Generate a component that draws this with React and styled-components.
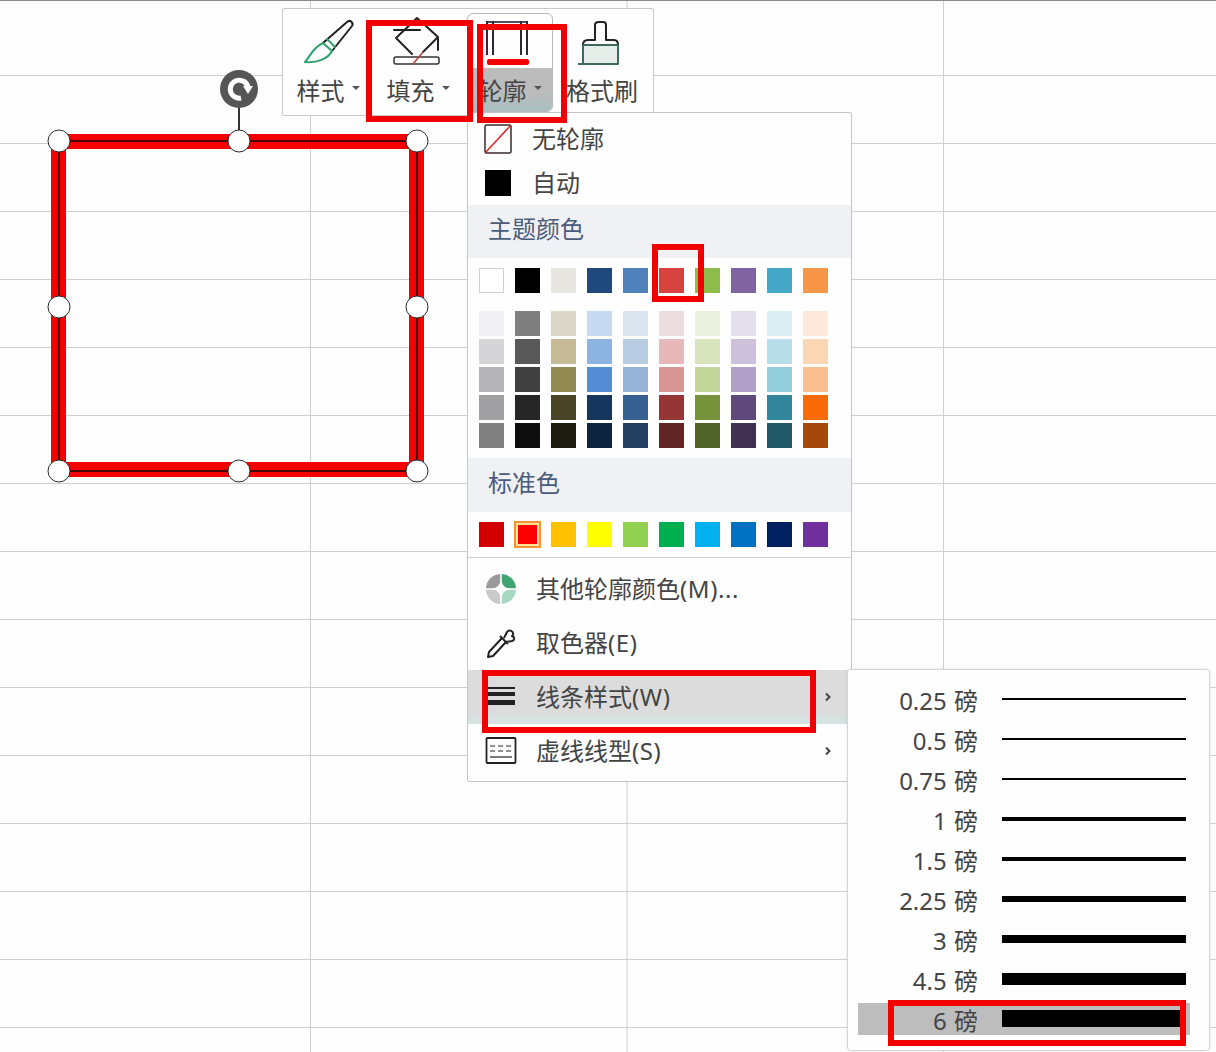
import React from "react";
import styled, { createGlobalStyle } from "styled-components";

const GlobalStyle = createGlobalStyle`
  html, body {
    margin: 0;
    padding: 0;
    background: #fdfdfd;
  }
  * {
    box-sizing: border-box;
  }
`;

const Page = styled.div`
  position: relative;
  width: 1216px;
  height: 1052px;
  overflow: hidden;
  display: flex;
  flex-direction: column;
  color: #444;
  font-family: "Noto Sans", "Noto Sans CJK SC", sans-serif;
  font-size: 24px;
  background-color: #fdfdfd;
  background-image: linear-gradient(to right, #cfcfcf 1px, transparent 1px);
  background-size: 316.5px 100%;
  background-position: 310px 0;
`;
const SheetTop = styled.div`
  height: 75px;
  flex: none;
  border-top: 1px solid #8a8a8a;
`;
const SheetRows = styled.div`
  flex: 1;
  background-image: linear-gradient(to bottom, #cfcfcf 1px, transparent 1px);
  background-size: 100% 68px;
`;

/* selected shape */
const Selection = styled.div`
  position: absolute;
  left: 59px;
  top: 141px;
  width: 358px;
  height: 330px;
`;
const Outline = styled.div`
  position: absolute;
  inset: -7px -7px -6px -8px;
  border: 15px solid #f40000;
  &::after {
    content: "";
    position: absolute;
    inset: -9px -9px -10px -8px;
    border: 2px solid #4a0505;
  }
`;
const Handle = styled.span`
  position: absolute;
  left: ${(p) => p.$left}%;
  top: ${(p) => p.$top}%;
  width: 23px;
  height: 23px;
  transform: translate(-50%, -50%);
  border-radius: 50%;
  background: #fff;
  border: 1.5px solid #2c2c2c;
`;
const RotateStem = styled.span`
  position: absolute;
  left: 180px;
  top: -34px;
  width: 2px;
  height: 24px;
  margin-left: -1px;
  background: #333;
`;
const RotateKnob = styled.svg`
  position: absolute;
  left: 161px;
  top: -71px;
  width: 38px;
  height: 38px;
`;

/* floating toolbar */
const Toolbar = styled.div`
  position: absolute;
  left: 282px;
  top: 8px;
  width: 372px;
  height: 108px;
  display: flex;
  padding-top: 4px;
  background: #fefefe;
  border: 1px solid #c9c9c9;
  border-radius: 2px;
`;
const ToolButton = styled.div`
  width: ${(p) => p.$width}px;
  margin: ${(p) => (p.$active ? "0 3px 0 4px" : "0")};
  height: 99px;
  display: flex;
  flex-direction: column;
  align-items: center;
  border-radius: 6px;
  border: ${(p) => (p.$active ? "1px solid #b8b8b8" : "1px solid transparent")};
  overflow: hidden;
`;
const ToolIcon = styled.svg`
  flex: none;
  width: 56px;
  height: 54px;
`;
const ToolLabel = styled.div`
  flex: 1;
  align-self: stretch;
  display: flex;
  align-items: center;
  justify-content: center;
  gap: 7px;
  padding-top: 2px;
  line-height: 1;
  background: ${(p) =>
    p.$active ? "linear-gradient(#bcbcbc 55%, #a9bfc3)" : "transparent"};
`;
const Caret = styled.i`
  width: 0;
  height: 0;
  margin-bottom: 6px;
  border-left: 4px solid transparent;
  border-right: 4px solid transparent;
  border-top: 4px solid #555;
`;

/* outline dropdown */
const Menu = styled.div`
  position: absolute;
  left: 467px;
  top: 112px;
  width: 385px;
  height: 670px;
  padding-top: 4px;
  background: #fefefe;
  border: 1px solid #c4c4c4;
  border-radius: 2px;
`;
const SimpleRow = styled.div`
  height: 44px;
  display: flex;
  align-items: center;
  gap: 20px;
  padding-left: 16px;
  line-height: 1;
`;
const SectionHeader = styled.div`
  height: ${(p) => p.$height}px;
  display: flex;
  align-items: center;
  padding: 0 0 5px 20px;
  background: #f0f1f5;
  color: #4a5c7c;
  line-height: 1;
`;
const Swatches = styled.div`
  display: grid;
  grid-template-columns: repeat(10, 25px);
  column-gap: 11.1px;
  padding: ${(p) => p.$padding};
`;
const TintGrid = styled(Swatches)`
  grid-auto-flow: column;
  grid-template-rows: repeat(5, 25px);
  row-gap: 3px;
`;
const Swatch = styled.div`
  width: 25px;
  height: 25px;
  background: ${(p) => p.$color};
  border: ${(p) => (p.$outlined ? "1px solid #cfd1d6" : "none")};
  ${(p) =>
    p.$selected &&
    "border: 2px solid #f29436; box-shadow: inset 0 0 0 2px #ffe294; margin: -1px; width: 27px; height: 27px;"}
`;
const Separator = styled.div`
  height: 1px;
  background: #cdcdcd;
  margin-bottom: 4px;
`;
const ActionRow = styled.div`
  height: 54px;
  display: flex;
  align-items: center;
  gap: 19px;
  padding: 0 19px 0 17px;
  line-height: 1;
  background: ${(p) =>
    p.$active ? "linear-gradient(#dcdcdc 78%, #d4e5e4)" : "transparent"};
`;
const ActionIcon = styled.svg`
  flex: none;
  width: 32px;
  height: 32px;
`;
const ActionText = styled.span`
  flex: 1;
`;
const Hotkey = styled.span`
  letter-spacing: 0.6px;
`;
const Chevron = styled.svg`
  flex: none;
  width: 8px;
  height: 10px;
`;

/* line weight submenu */
const WeightMenu = styled.div`
  position: absolute;
  left: 847px;
  top: 669px;
  width: 363px;
  height: 382px;
  padding-top: 13px;
  background: #fefefe;
  border: 1px solid #d6d6d6;
  border-radius: 4px;
  box-shadow: 0 0 3px rgba(0, 0, 0, 0.1);
`;
const WeightRow = styled.div`
  width: 332px;
  height: 32px;
  margin: 0 0 8px 10px;
  display: flex;
  align-items: center;
  gap: 24px;
  background: ${(p) => (p.$selected ? "#bdbdbd" : "transparent")};
`;
const WeightLabel = styled.span`
  width: 120px;
  padding-top: 4px;
  text-align: right;
  line-height: 1;
  white-space: pre;
  word-spacing: 1px;
`;
const WeightLine = styled.div`
  width: 184px;
  height: ${(p) => p.$size}px;
  margin-bottom: 1px;
  background: #000;
`;

/* red marks drawn on top of the screenshot */
const Mark = styled.div`
  position: absolute;
  left: ${(p) => p.$x}px;
  top: ${(p) => p.$y}px;
  width: ${(p) => p.$w}px;
  height: ${(p) => p.$h}px;
  border: 6px solid #f00000;
`;

const themeColors = [
  "#ffffff", "#000000", "#e8e6e1", "#1f497d", "#4f81bd",
  "#d8433f", "#8cbd4a", "#8064a2", "#46a8c8", "#f79646",
];
const tintColors = [
  "#f1f1f3", "#d5d5d8", "#b5b5b7", "#a0a0a2", "#808080",
  "#7f7f7f", "#595959", "#404040", "#262626", "#0d0d0d",
  "#dcd6c6", "#c7bb97", "#938953", "#4a4526", "#1d1b10",
  "#c6d9f0", "#8db3e2", "#548dd4", "#17365d", "#0f243e",
  "#dce6f1", "#b8cce4", "#95b3d7", "#366092", "#244061",
  "#ecdcdd", "#e6b8b7", "#da9694", "#963634", "#632523",
  "#ebf1de", "#d8e4bc", "#c4d79b", "#76933c", "#4f6228",
  "#e4dfec", "#ccc0da", "#b1a0c7", "#60497a", "#403151",
  "#daeef3", "#b7dee8", "#92cddc", "#31869b", "#205867",
  "#fde9d9", "#fcd5b4", "#fabf8f", "#f96b05", "#a5480a",
];
const standardColors = [
  "#d20000", "#ff0000", "#ffc000", "#ffff00", "#92d050",
  "#00b050", "#00b0f0", "#0070c0", "#002060", "#7030a0",
];
const weights = [
  ["0.25", 2], ["0.5", 2], ["0.75", 2], ["1", 4], ["1.5", 4],
  ["2.25", 6], ["3", 8], ["4.5", 12], ["6", 17],
];
const marks = [
  { x: 366, y: 20, w: 107, h: 102 },
  { x: 477, y: 24, w: 90, h: 99 },
  { x: 652, y: 244, w: 52, h: 58 },
  { x: 482, y: 670, w: 334, h: 63 },
  { x: 888, y: 1000, w: 298, h: 46 },
];
const handles = [
  [0, 0], [50.3, 0], [100, 0], [0, 50.3], [100, 50.3], [0, 100], [50.3, 100], [100, 100],
];

const BrushIcon = () => (
  <ToolIcon viewBox="0 0 56 54" fill="none" strokeLinejoin="round" strokeLinecap="round">
    <path d="M23 29 L47 8 C50 5 54 9 52 12 L32 37" stroke="#222" strokeWidth="2" />
    <path d="M23 29 L32 37 C28 45 17 49 5 48 C10 43 12 34 23 29 Z" stroke="#2fa36f" strokeWidth="2" fill="#fff" />
    <path d="M27 25 L35 33" stroke="#2fa36f" strokeWidth="2" />
  </ToolIcon>
);

const BucketIcon = () => (
  <ToolIcon viewBox="0 0 56 54" fill="none" strokeLinecap="round" strokeLinejoin="round">
    <path d="M6 24 L27 4 L48 23 L33 38 M6 24 L22 40 M48 23 V36" stroke="#222" strokeWidth="2" />
    <path d="M4 16 H30" stroke="#222" strokeWidth="2" />
    <rect x="4" y="43" width="45" height="7" rx="2" stroke="#333" strokeWidth="1.5" />
    <path d="M33 38 L23 50" stroke="#b3423f" strokeWidth="1.5" />
  </ToolIcon>
);

const OutlineIcon = () => (
  <ToolIcon viewBox="0 0 56 54" fill="none">
    <path d="M5 8 H44" stroke="#554a66" strokeWidth="2" />
    <path d="M5 7 V41 M11 7 V41 M39 7 V41 M45 7 V41" stroke="#2c2836" strokeWidth="2" />
    <rect x="5" y="45" width="42" height="6" rx="2" fill="#f00000" />
  </ToolIcon>
);

const PainterIcon = () => (
  <ToolIcon viewBox="0 0 56 54" fill="none" strokeLinejoin="round">
    <path d="M9 31 H44 V50 H9 Z" fill="#e6eeea" />
    <path d="M9 31 C9 27 11 26 14 26 H21 V11 C21 9 23 8 25 8 H29 C31 8 32 9 32 11 V26 H40 C43 26 44 28 44 31" stroke="#222" strokeWidth="2" />
    <path d="M9 31 H44 M9 31 V50 M44 31 V50 H4" stroke="#3d6a60" strokeWidth="2" />
  </ToolIcon>
);

const NoLineIcon = () => (
  <svg width="28" height="30" viewBox="0 0 28 30" fill="none">
    <rect x="1" y="1" width="26" height="28" rx="1.5" stroke="#3a2a2a" strokeWidth="1.5" />
    <path d="M1.5 28.5 L26.5 1.5" stroke="#d92525" strokeWidth="1.5" />
  </svg>
);

const AutoIcon = () => (
  <svg width="28" height="28" viewBox="0 0 28 28">
    <rect x="1" y="1" width="26" height="26" fill="#000" />
  </svg>
);

const WheelIcon = () => (
  <ActionIcon viewBox="0 0 32 32">
    <path d="M15.2 15.2 V1 A15 15 0 0 0 1 15.2 Z" fill="#9a9a9a" />
    <path d="M16.8 15.2 V1 A15 15 0 0 1 31 15.2 Z" fill="#41a572" />
    <path d="M15.2 16.8 H1 A15 15 0 0 0 15.2 31 Z" fill="#c9c9c9" />
    <path d="M16.8 16.8 H31 A15 15 0 0 1 16.8 31 Z" fill="#a8d9c0" />
    <path d="M16 6 C16.8 12 20 15.2 26 16 C20 16.8 16.8 20 16 26 C15.2 20 12 16.8 6 16 C12 15.2 15.2 12 16 6 Z" fill="#fefefe" />
  </ActionIcon>
);

const DropperIcon = () => (
  <ActionIcon viewBox="0 0 32 32" fill="none" stroke="#222" strokeWidth="2" strokeLinejoin="round">
    <path d="M17 11 L4 25 L3 30 L8 29 L21 15" />
    <path d="M15 9 L23 17 M19 11 L22 5 C24 2 29 4 28 8 L27 9 C30 10 30 13 27 14 L21 15" />
  </ActionIcon>
);

const LinesIcon = () => (
  <ActionIcon viewBox="0 0 32 32">
    <rect x="2" y="6" width="28" height="2" fill="#222" />
    <rect x="2" y="11" width="28" height="4" fill="#222" />
    <rect x="2" y="19" width="28" height="5" fill="#222" />
  </ActionIcon>
);

const DashIcon = () => (
  <ActionIcon viewBox="0 0 32 32" fill="none" stroke="#222">
    <rect x="1.5" y="3" width="29" height="25" rx="1" strokeWidth="1.8" />
    <path d="M5 11 H27 M5 16 H27" strokeWidth="1.2" strokeDasharray="5 3" />
    <path d="M5 22 H27" strokeWidth="1.2" />
  </ActionIcon>
);

const ChevronIcon = () => (
  <Chevron viewBox="0 0 8 10" fill="none" stroke="#444" strokeWidth="2">
    <path d="M2 1.5 L5.5 5 L2 8.5" />
  </Chevron>
);

const App = () => {
  return (
    <Page>
      <GlobalStyle />
      <SheetTop />
      <SheetRows />

      <Selection>
        <Outline />
        <RotateStem />
        <RotateKnob viewBox="0 0 38 38">
          <circle cx="19" cy="19" r="19" fill="#555" />
          <path d="M21 28 A9 9 0 1 1 28 17" fill="none" stroke="#fff" strokeWidth="5" />
          <path d="M23 16 H33 L28 24 Z" fill="#fff" />
        </RotateKnob>
        {handles.map(([left, top]) => (
          <Handle key={`${left}-${top}`} $left={left} $top={top} />
        ))}
      </Selection>

      <Toolbar>
        <ToolButton $width={90}>
          <BrushIcon />
          <ToolLabel>样式<Caret /></ToolLabel>
        </ToolButton>
        <ToolButton $width={90}>
          <BucketIcon />
          <ToolLabel>填充<Caret /></ToolLabel>
        </ToolButton>
        <ToolButton $width={86} $active>
          <OutlineIcon />
          <ToolLabel $active>轮廓<Caret /></ToolLabel>
        </ToolButton>
        <ToolButton $width={92}>
          <PainterIcon />
          <ToolLabel>格式刷</ToolLabel>
        </ToolButton>
      </Toolbar>

      <Menu>
        <SimpleRow><NoLineIcon />无轮廓</SimpleRow>
        <SimpleRow><AutoIcon />自动</SimpleRow>
        <SectionHeader $height={53}>主题颜色</SectionHeader>
        <Swatches $padding="10px 0 18px 10.5px">
          {themeColors.map((c, i) => (
            <Swatch key={i} $color={c} $outlined={i === 0} />
          ))}
        </Swatches>
        <TintGrid $padding="0 0 10px 10.5px">
          {tintColors.map((c, i) => (
            <Swatch key={i} $color={c} />
          ))}
        </TintGrid>
        <SectionHeader $height={54}>标准色</SectionHeader>
        <Swatches $padding="10px 0 10px 10.5px">
          {standardColors.map((c, i) => (
            <Swatch key={i} $color={c} $selected={i === 1} />
          ))}
        </Swatches>
        <Separator />
        <ActionRow><WheelIcon /><ActionText>其他轮廓颜色<Hotkey>(M)...</Hotkey></ActionText></ActionRow>
        <ActionRow><DropperIcon /><ActionText>取色器<Hotkey>(E)</Hotkey></ActionText></ActionRow>
        <ActionRow $active><LinesIcon /><ActionText>线条样式<Hotkey>(W)</Hotkey></ActionText><ChevronIcon /></ActionRow>
        <ActionRow><DashIcon /><ActionText>虚线线型<Hotkey>(S)</Hotkey></ActionText><ChevronIcon /></ActionRow>
      </Menu>

      <WeightMenu>
        {weights.map(([label, size]) => (
          <WeightRow key={label} $selected={label === "6"}>
            <WeightLabel>{label} 磅</WeightLabel>
            <WeightLine $size={size} />
          </WeightRow>
        ))}
      </WeightMenu>

      {marks.map((m) => (
        <Mark key={`${m.x}-${m.y}`} $x={m.x} $y={m.y} $w={m.w} $h={m.h} />
      ))}
    </Page>
  );
};

export default App;
